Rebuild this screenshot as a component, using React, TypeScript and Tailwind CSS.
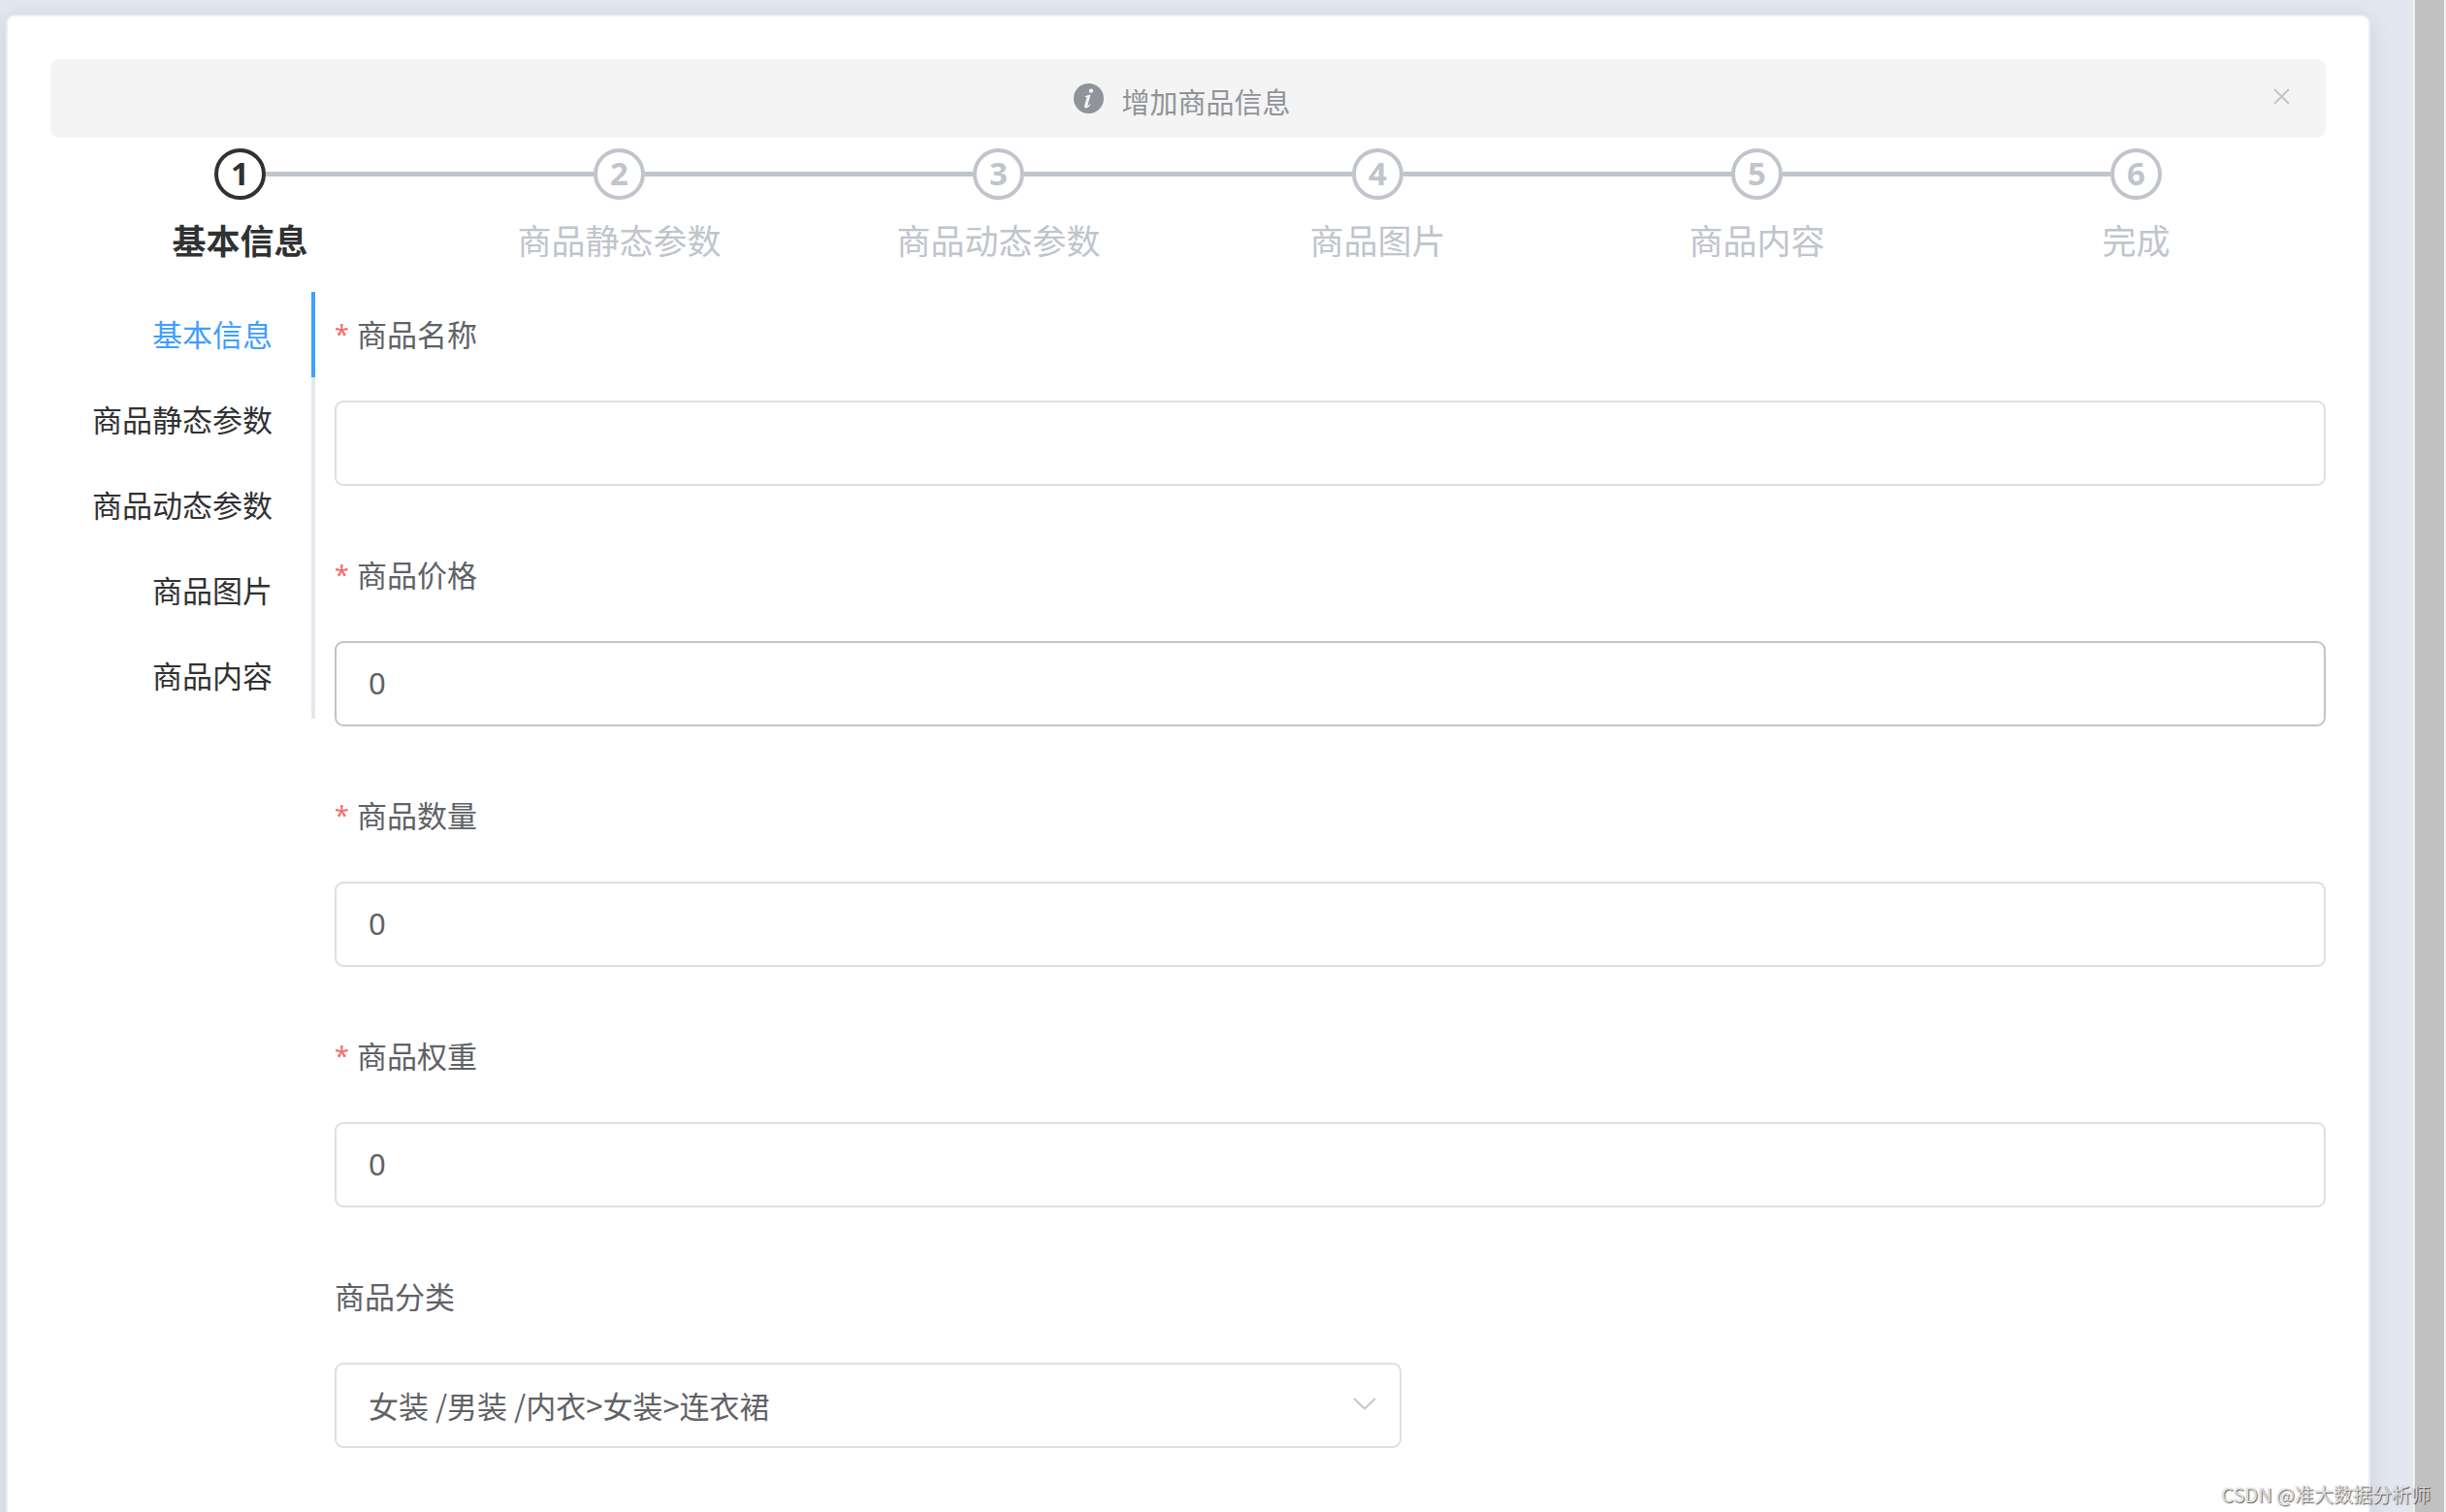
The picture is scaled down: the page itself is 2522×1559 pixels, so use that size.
import { useState } from 'react';

const steps = ['基本信息', '商品静态参数', '商品动态参数', '商品图片', '商品内容', '完成'];
const tabs = steps.slice(0, 5);

function StepBar({ active }: { active: number }) {
  return (
    <ol className="mt-[11px] mb-[9px] flex">
      {steps.map((title, i) => {
        const on = i === active;
        return (
          <li key={title} className={on ? 'flex-1 text-[#303133]' : 'flex-1 text-[#c0c4cc]'}>
            <div className="flex items-center">
              <span className={i === 0 ? 'h-[5px] flex-1' : 'h-[5px] flex-1 bg-[#c0c4cc]'} />
              <span className="flex size-[53px] items-center justify-center rounded-full border-4 border-current pb-0.5 text-[33px] leading-none font-bold">
                {i + 1}
              </span>
              <span
                className={i === steps.length - 1 ? 'h-[5px] flex-1' : 'h-[5px] flex-1 bg-[#c0c4cc]'}
              />
            </div>
            <div
              className={
                on
                  ? 'text-center text-[35px] leading-[86px] font-bold'
                  : 'text-center text-[35px] leading-[86px]'
              }
            >
              {title}
            </div>
          </li>
        );
      })}
    </ol>
  );
}

type FieldProps = { id: string; label: string; value: string; highlighted?: boolean };

function Field({ id, label, value, highlighted }: FieldProps) {
  return (
    <div className="mb-12">
      <label htmlFor={id} className="mb-6 flex h-[88px] items-center text-[#606266]">
        <span className="mr-2 text-[27px]/[44px] text-[#f56c6c]">*</span>
        {label}
      </label>
      <input
        id={id}
        type="text"
        defaultValue={value}
        className={
          highlighted
            ? 'block h-[88px] w-full rounded-[9px] border-2 border-[#c0c4cc] bg-white px-[33px] pb-0.5 text-[#606266] outline-none'
            : 'block h-[88px] w-full rounded-[9px] border-2 border-[#dcdfe6] bg-white px-[33px] pb-0.5 text-[#606266] outline-none'
        }
      />
    </div>
  );
}

export default function App() {
  const [tab, setTab] = useState(0);
  return (
    <div className="relative flex h-screen overflow-hidden bg-[#e3e7f0] font-['Noto_Sans','Noto_Sans_CJK_SC',sans-serif] text-[31px] leading-[44px]">
      <main className="min-w-0 flex-1 pt-[15px] pr-11 pl-[6px]">
        <section className="rounded-[9px] border-2 border-[#ebeef5] bg-white px-11 pt-11 pb-40 shadow-[0_4px_26px_rgba(0,0,0,0.1)]">
          <div
            role="alert"
            className="flex h-[81px] items-center rounded-[9px] bg-[#f4f4f4] px-9 text-[#909399]"
          >
            <div className="ml-2 flex flex-1 items-center justify-center gap-[18px]">
              <svg viewBox="0 0 31 31" className="size-[31px]" aria-hidden="true">
                <circle cx="15.5" cy="15.5" r="15.5" fill="#909399" />
                <circle cx="18" cy="7.6" r="2.2" fill="#f4f4f4" />
                <path
                  d="M11.6 13.2c2.2-.5 3.8-1 5.9-1.6l-3 10.8c-.2.8.1 1 .6.7.7-.5 1.3-1.2 1.900-2l.6.4c-1.3 2.2-2.9 3.9-4.8 3.9-1.500 0-2.100-1-1.600-2.700l2.100-7.500c.2-.9.1-1.300-.8-1.300h-.9z"
                  fill="#f4f4f4"
                />
              </svg>
              <span className="mt-2 text-[29px]">增加商品信息</span>
            </div>
            <button type="button" aria-label="关闭" className="mb-1 flex size-5 items-center justify-center">
              <svg viewBox="0 0 17 17" className="size-[17px]" aria-hidden="true">
                <path d="M1 1l15 15M16 1L1 16" stroke="#c0c4cc" strokeWidth="1.8" fill="none" />
              </svg>
            </button>
          </div>

          <StepBar active={0} />

          <div className="flex items-start gap-5">
            <div role="tablist" aria-orientation="vertical" className="flex w-[273px] shrink-0 flex-col">
              {tabs.map((name, i) => (
                <button
                  key={name}
                  type="button"
                  role="tab"
                  aria-selected={i === tab}
                  onClick={() => setTab(i)}
                  className={
                    i === tab
                      ? 'h-[88px] border-r-4 border-[#409eff] pr-10 text-right text-[#409eff]'
                      : 'h-[88px] border-r-4 border-[#e4e7ed] pr-10 text-right text-[#303133]'
                  }
                >
                  {name}
                </button>
              ))}
            </div>

            <form className="min-w-0 flex-1">
              <Field id="name" label="商品名称" value="" />
              <Field id="price" label="商品价格" value="0" highlighted />
              <Field id="count" label="商品数量" value="0" />
              <Field id="weight" label="商品权重" value="0" />
              <label htmlFor="category" className="mb-6 flex h-[88px] items-center text-[#606266]">
                商品分类
              </label>
              <div className="relative w-full max-w-[1100px]">
                <select
                  id="category"
                  className="block h-[88px] w-full appearance-none rounded-[9px] border-2 border-[#dcdfe6] bg-white px-[33px] font-['Noto_Sans_CJK_SC',sans-serif] text-[#606266] outline-none"
                >
                  <option>女装 /男装 /内衣&gt;女装&gt;连衣裙</option>
                </select>
                <svg
                  viewBox="0 0 24 13"
                  className="pointer-events-none absolute top-9 right-[26px] h-[13px] w-6"
                  aria-hidden="true"
                >
                  <path d="M1 1l11 10.5L23 1" stroke="#c0c4cc" strokeWidth="1.8" fill="none" />
                </svg>
              </div>
            </form>
          </div>
        </section>
      </main>
      <div className="w-[34px] shrink-0 border-x-2 border-[#f1f1f1] bg-[#c1c1c1]" />
      <p className="absolute right-4 bottom-1 font-['Noto_Sans_CJK_SC',sans-serif] text-[20px] leading-7 text-white/80 [text-shadow:1px_1px_1px_rgba(0,0,0,0.6),0_0_1px_rgba(0,0,0,0.4)]">
        CSDN @准大数据分析师
      </p>
    </div>
  );
}
